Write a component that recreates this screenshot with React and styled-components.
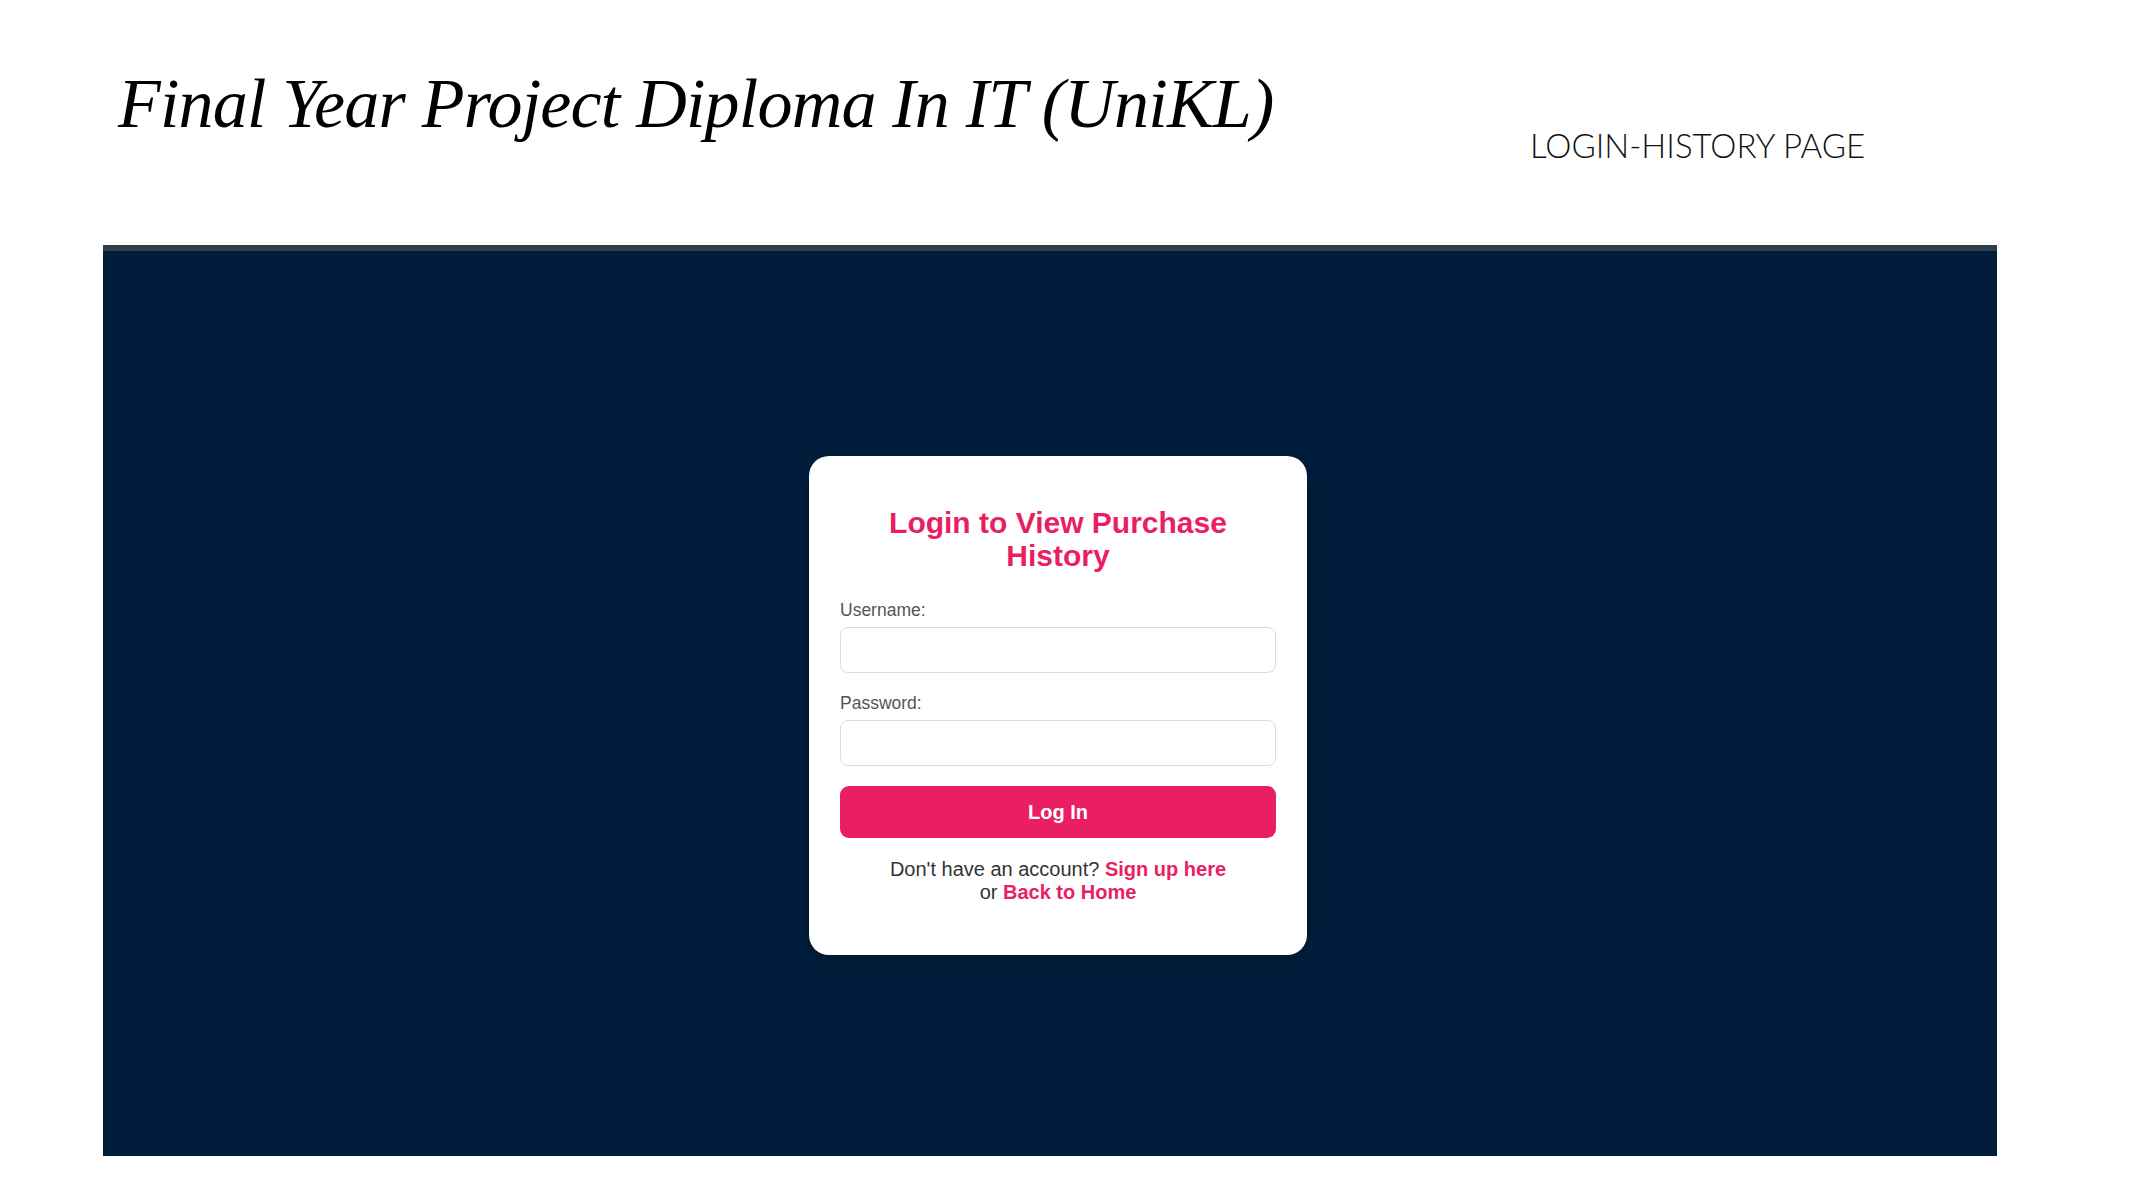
import React from 'react'
import styled, { createGlobalStyle } from 'styled-components'

const GlobalStyle = createGlobalStyle`
  body {
    margin: 0;
    background: #ffffff;
    font-family: "Liberation Sans", Arial, sans-serif;
  }
`

const StyledPage = styled.div`
  width: 2135px;
  height: 1200px;
  background: #ffffff;
  overflow: hidden;
`

const StyledHeader = styled.header`
  display: grid;
  grid-template-columns: 1412px auto;
  height: 245px;
  padding-left: 118px;
  box-sizing: border-box;
`

const StyledTitle = styled.h1`
  margin: 69px 0 0 0;
  font-family: "Liberation Serif", "Times New Roman", serif;
  font-style: italic;
  font-weight: 400;
  font-size: 70px;
  line-height: 1;
  letter-spacing: -0.8px;
  color: #000;
  white-space: nowrap;
`

const StyledPageLabel = styled.div`
  margin-top: 129px;
  font-family: Lato, "Open Sans", sans-serif;
  font-weight: 300;
  font-size: 33px;
  line-height: 1;
  color: #111;
  white-space: nowrap;
`

const StyledPanel = styled.section`
  display: flex;
  align-items: center;
  justify-content: center;
  margin: 0 138px 0 103px;
  height: 911px;
  padding: 4px 0 0 16px;
  box-sizing: border-box;
  background: #001e3c;
  border-top: 6px solid #2f3f45;
`

const StyledCard = styled.div`
  width: 498px;
  padding: 50px 31px 51px 31px;
  box-sizing: border-box;
  background: #ffffff;
  border-radius: 20px;
  box-shadow: 0 4px 14px rgba(0, 0, 0, 0.25);
`

const StyledCardTitle = styled.h2`
  margin: 0 0 28px 0;
  font-size: 30px;
  line-height: 33px;
  font-weight: 700;
  text-align: center;
  color: #e91e63;
`

const StyledLabel = styled.label`
  display: block;
  margin-bottom: 7px;
  font-size: 17.5px;
  line-height: 20px;
  color: #555;
`

const StyledInput = styled.input`
  display: block;
  width: 100%;
  height: 46px;
  margin-bottom: 20px;
  box-sizing: border-box;
  border: 1px solid #dcdcdc;
  border-radius: 8px;
  background: #fff;
  font-size: 17px;
  outline: none;
`

const StyledButton = styled.button`
  display: block;
  width: 100%;
  height: 52px;
  border: none;
  border-radius: 9px;
  background: #e91e63;
  color: #fff;
  font-family: "Liberation Sans", Arial, sans-serif;
  font-size: 20px;
  font-weight: 700;
  cursor: pointer;
`

const StyledFooter = styled.p`
  margin: 20px 0 0 0;
  font-size: 20px;
  line-height: 23px;
  text-align: center;
  color: #333;

  a {
    color: #e91e63;
    font-weight: 700;
    text-decoration: none;
  }
`

const App = () => {
  return (
    <StyledPage>
      <GlobalStyle />
      <StyledHeader>
        <StyledTitle>Final Year Project Diploma In IT (UniKL)</StyledTitle>
        <StyledPageLabel>LOGIN-HISTORY PAGE</StyledPageLabel>
      </StyledHeader>
      <StyledPanel>
        <StyledCard>
          <StyledCardTitle>
            Login to View Purchase
            <br />
            History
          </StyledCardTitle>
          <StyledLabel htmlFor="username">Username:</StyledLabel>
          <StyledInput id="username" type="text" />
          <StyledLabel htmlFor="password">Password:</StyledLabel>
          <StyledInput id="password" type="password" />
          <StyledButton type="button">Log In</StyledButton>
          <StyledFooter>
            Don't have an account? <a href="#signup">Sign up here</a>
            <br />
            or <a href="#home">Back to Home</a>
          </StyledFooter>
        </StyledCard>
      </StyledPanel>
    </StyledPage>
  )
}

export default App
